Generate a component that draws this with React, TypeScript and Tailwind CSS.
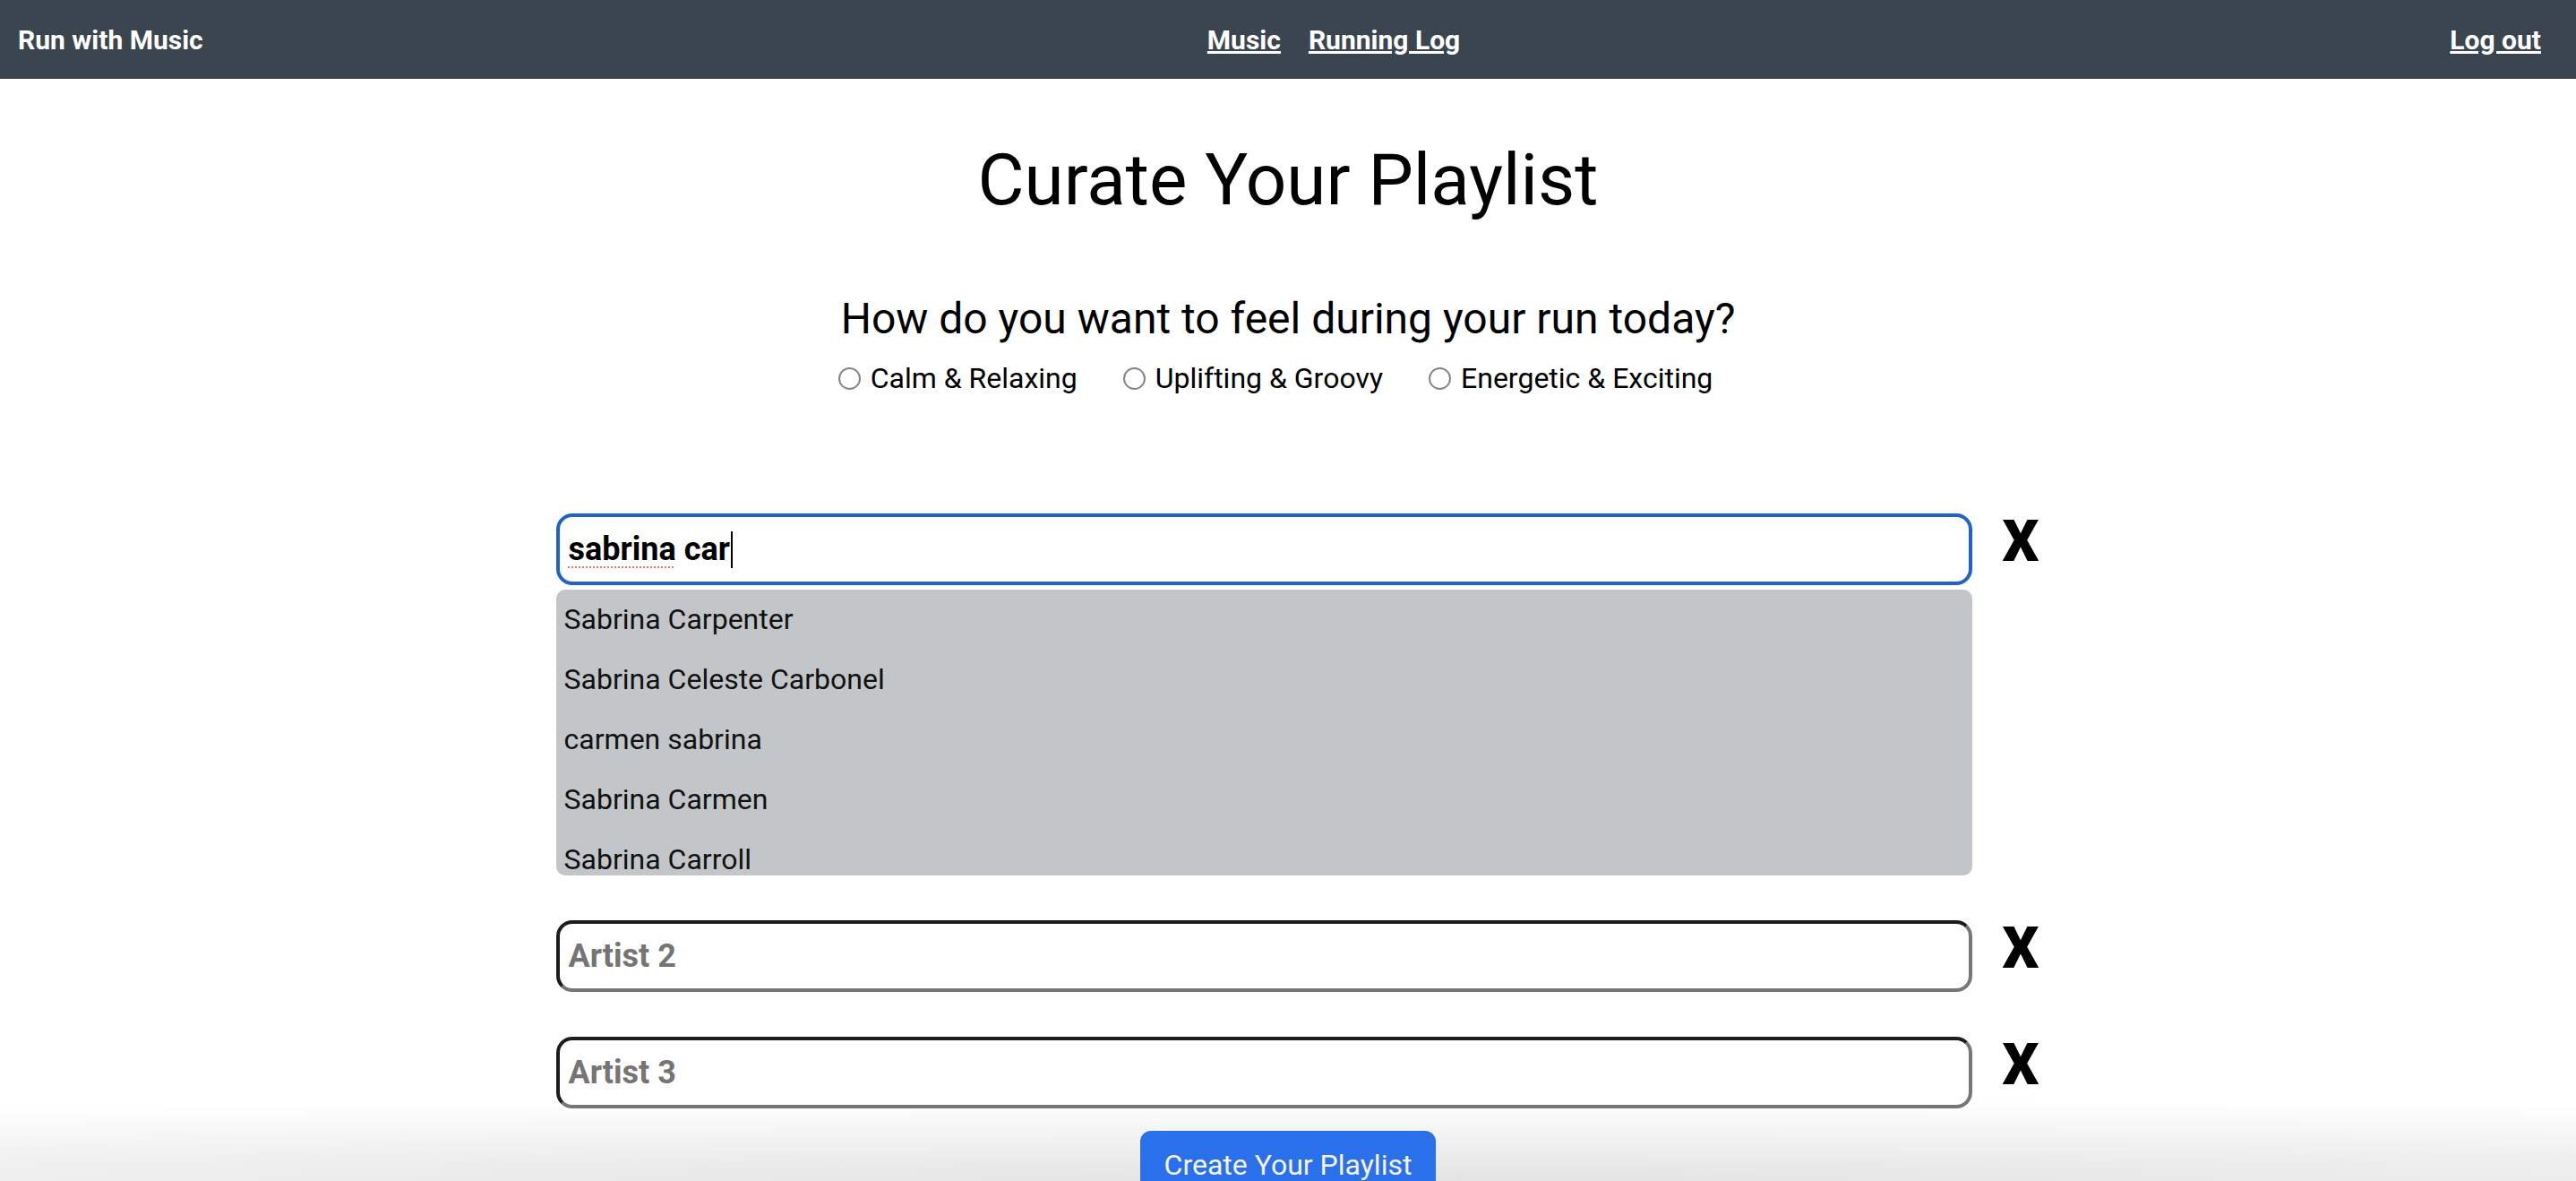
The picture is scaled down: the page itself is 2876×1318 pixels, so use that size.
import React from "react";

const suggestions = [
  "Sabrina Carpenter",
  "Sabrina Celeste Carbonel",
  "carmen sabrina",
  "Sabrina Carmen",
  "Sabrina Carroll",
];

const moods = ["Calm & Relaxing", "Uplifting & Groovy", "Energetic & Exciting"];

function XMark() {
  return (
    <span className="ml-[34px] text-[64px] leading-[64px] font-black text-black select-none">
      X
    </span>
  );
}

function EmptyInput({ placeholder }: { placeholder: string }) {
  return (
    <div className="flex w-[1581px] h-[80px] items-center rounded-[18px] border-[4px] border-t-[#1c1c1c] border-l-[#1c1c1c] border-b-[#767676] border-r-[#767676] bg-white pl-[10px]">
      <span className="text-[36px] font-bold leading-none text-[#757575]">{placeholder}</span>
    </div>
  );
}

export default function App() {
  return (
    <div className="relative h-[1318px] w-full overflow-hidden bg-white text-black [font-family:Roboto,'Liberation_Sans',sans-serif]">
      <div className="pointer-events-none absolute bottom-0 left-0 right-0 h-[90px] bg-[radial-gradient(130%_100%_at_55%_100%,#e3e3e3_0%,#ffffff00_100%)]" />

      <nav className="relative flex h-[88px] items-center justify-between bg-[#3a4550] pl-[20px] pr-[39px] text-[30px] font-bold text-white">
        <span>Run with Music</span>
        <div className="ml-[16px] flex gap-[31px]">
          <a className="underline">Music</a>
          <a className="underline">Running Log</a>
        </div>
        <a className="underline">Log out</a>
      </nav>

      <main className="relative flex flex-col items-center">
        <h1 className="mt-[65px] text-[80px] font-normal leading-[96px]">Curate Your Playlist</h1>
        <h4 className="mt-[78px] text-[48px] font-normal leading-[58px]">
          How do you want to feel during your run today?
        </h4>
        <div className="mt-[13px] flex h-[48px] items-center gap-[51px] pr-[28px] text-[32px] leading-[48px]">
          {moods.map((m) => (
            <label key={m} className="flex items-center">
              <span className="mr-[11px] inline-block h-[25px] w-[25px] rounded-full border-[2px] border-[#858585] bg-white" />
              <span>{m}</span>
            </label>
          ))}
        </div>

        <div className="mt-[127px] flex items-start pl-[21px]">
          <div className="flex w-[1581px] flex-col">
            <div className="flex h-[80px] items-center rounded-[18px] border-[4px] border-[#1f62c9] bg-white pl-[10px]">
              <span className="text-[36px] font-bold leading-none">
                <span className="underline decoration-dotted decoration-[#e8736b] decoration-2 underline-offset-[7px]">
                  sabrina
                </span>{" "}
                car
              </span>
              <span className="ml-[1px] inline-block h-[41px] w-[2px] bg-black" />
            </div>
            <div className="mt-[5px] h-[319px] overflow-hidden rounded-[10px] bg-[#c3c6c9]">
              {suggestions.map((s) => (
                <div key={s} className="h-[67px] pl-[9px] text-[32px] leading-[67px] text-[#111]">
                  {s}
                </div>
              ))}
            </div>
          </div>
          <XMark />
        </div>

        <div className="mt-[50px] flex items-start pl-[21px]">
          <EmptyInput placeholder="Artist 2" />
          <XMark />
        </div>

        <div className="mt-[50px] flex items-start pl-[21px]">
          <EmptyInput placeholder="Artist 3" />
          <XMark />
        </div>

        <button className="mt-[25px] rounded-[12px] border-[2px] border-[#2a70eb] bg-[#2a70eb] px-[25px] py-[12px] text-[32px] leading-[48px] text-[#f4f4f4]">
          Create Your Playlist
        </button>
      </main>
    </div>
  );
}
